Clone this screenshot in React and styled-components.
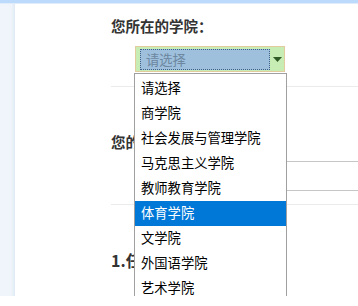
import React from "react";
import styled, { createGlobalStyle } from "styled-components";

const colleges = [
  "请选择",
  "商学院",
  "社会发展与管理学院",
  "马克思主义学院",
  "教师教育学院",
  "体育学院",
  "文学院",
  "外国语学院",
  "艺术学院",
];

const App = () => {
  return (
    <>
      <GlobalStyle />
      <StyledPage>
        <TopBar />
        <Body>
          <Sidebar />
          <Main>
            <Section>
              <Heading>您所在的学院：</Heading>
              <SelectWrap>
                <SelectBox>
                  <SelectValue>请选择</SelectValue>
                  <ArrowArea>
                    <svg width="9" height="5" viewBox="0 0 9 5">
                      <path d="M0 0 H9 L4.5 5 Z" fill="#2e5b26" />
                    </svg>
                  </ArrowArea>
                </SelectBox>
                <OptionList>
                  {colleges.map((name, i) => (
                    <Option key={name} active={i === 5}>
                      {name}
                    </Option>
                  ))}
                </OptionList>
              </SelectWrap>
            </Section>
            <Section top={45} bottom={13}>
              <Heading>您的姓名：</Heading>
              <TextInput />
            </Section>
            <Section top={45} last>
              <Question>1.任课教师的教学态度</Question>
            </Section>
          </Main>
        </Body>
      </StyledPage>
    </>
  );
};

export default App;

const GlobalStyle = createGlobalStyle`
  html, body {
    margin: 0;
    background-color: #fff;
  }

  body {
    font-family: "Noto Sans CJK SC", "Liberation Sans", sans-serif;
  }
`;

const StyledPage = styled.div`
  display: flex;
  flex-direction: column;

  width: 358px;
  height: 296px;

  overflow: hidden;
`;

const TopBar = styled.div`
  height: 3px;

  background-color: #bcdafb;
  border-bottom: 1px solid #e0ecfa;
`;

const Body = styled.div`
  display: flex;
  flex: 1;
  min-height: 0;
`;

const Sidebar = styled.div`
  width: 15px;

  background: linear-gradient(to right, #f0f5fb 0, #f0f5fb 11px, #e4edf7 14px, #dde7f3 15px);
`;

const Main = styled.div`
  flex: 1;

  padding-left: 96px;

  overflow: hidden;
`;

const Section = styled.div`
  padding: ${({ top }) => top ?? 12}px 0 ${({ bottom }) => bottom ?? 14}px 0;

  border-bottom: ${({ last }) => (last ? "none" : "1px solid #ebebeb")};
`;

const Heading = styled.div`
  height: 20px;

  font-size: 14.5px;
  font-weight: 700;
  line-height: 20px;
  color: #333;
  white-space: nowrap;
`;

const Question = styled(Heading)`
  font-size: 16px;
`;

const SelectWrap = styled.div`
  position: relative;

  width: 150px;
  margin: 10px 0 0 24px;
`;

const SelectBox = styled.div`
  display: flex;
  align-items: center;

  box-sizing: border-box;
  width: 150px;
  height: 26px;
  padding: 0 0 0 4px;

  background-color: #c8edb4;
  border: 1px solid #e2cc9e;
`;

const SelectValue = styled.div`
  box-sizing: border-box;
  width: 130px;
  height: 21px;
  padding-left: 5px;

  background-color: #9ec0dd;
  border: 1px dotted #3f6289;

  font-size: 13.3px;
  line-height: 19px;
  color: #6c879f;
`;

const ArrowArea = styled.div`
  display: flex;
  justify-content: center;
  align-items: center;

  flex: 1;
  height: 100%;
  padding-top: 1px;
`;

const OptionList = styled.div`
  position: absolute;
  top: calc(100% + 1px);
  left: -1px;
  z-index: 2;

  box-sizing: border-box;
  width: 153px;
  padding: 2px 0 4px;

  background-color: #fff;
  border: 1px solid #a0a0a0;
`;

const Option = styled.div`
  height: 25px;
  padding-left: 6px;

  font-size: 13.3px;
  line-height: 23px;
  white-space: nowrap;
  color: ${({ active }) => (active ? "#fff" : "#000")};

  background-color: ${({ active }) => (active ? "#0078d7" : "transparent")};
`;

const TextInput = styled.input`
  display: block;

  box-sizing: border-box;
  width: 300px;
  height: 30px;
  margin: 9px 0 0 24px;

  border: 1px solid #c6c6c6;
  background-color: #fff;
`;
